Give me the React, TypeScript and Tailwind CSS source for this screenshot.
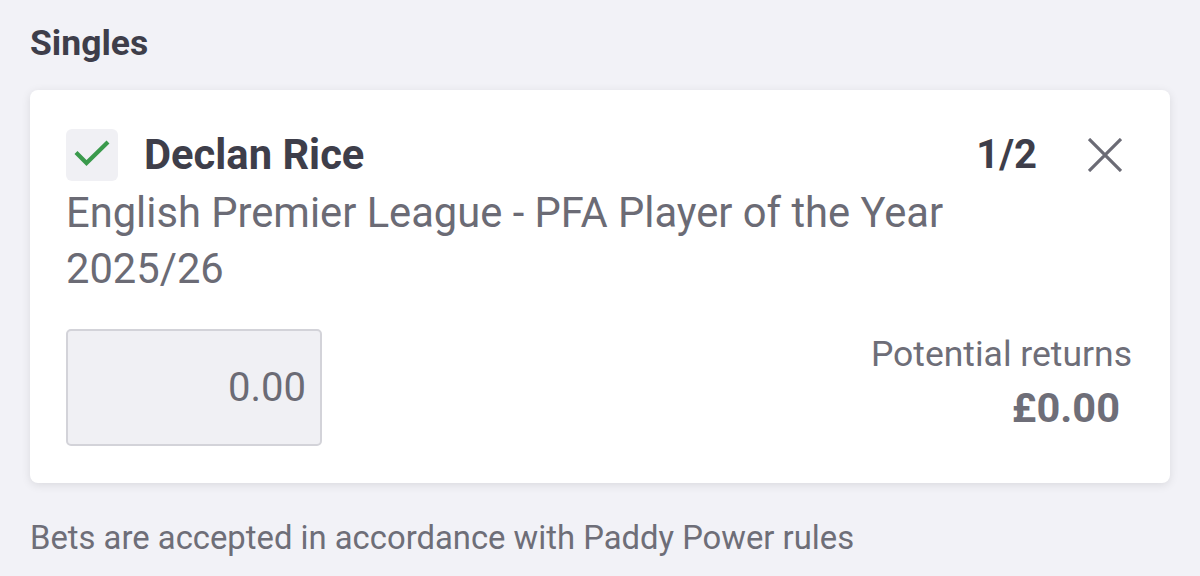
export default function App() {
  return (
    <div className="min-h-screen w-full bg-[#f2f2f7] px-[30px] pt-[23px] font-['Roboto',sans-serif]">
      <h2 className="text-[35.5px] font-bold leading-[40px] text-[#3e3e4a]">Singles</h2>

      <div className="mt-[27px] rounded-[8px] bg-white pb-[37px] pl-[36px] pr-[38px] pt-[39px] shadow-[0_2px_10px_rgba(0,0,0,0.10)]">
        <div className="flex items-center">
          <div className="h-[52px] w-[52px] rounded-[6px] bg-[#f0f0f4]">
            <svg width="52" height="52" viewBox="0 0 52 52" fill="none" stroke="#3a9a4c" strokeWidth="4.2" strokeLinecap="butt" strokeLinejoin="miter">
              <path d="M10 23.5l10.5 10.5L42 13" />
            </svg>
          </div>
          <span className="ml-[26px] text-[41.7px] font-bold leading-none text-[#3e3e4a]">Declan Rice</span>
          <span className="ml-auto text-[40px] font-bold leading-none text-[#3e3e4a]">1/2</span>
          <button className="ml-[51px] mr-[10px] text-[#6b6b75]">
            <svg width="34" height="34" viewBox="0 0 34 34" fill="none" stroke="currentColor" strokeWidth="3.2">
              <path d="M1 1L33 33M33 1L1 33" />
            </svg>
          </button>
        </div>

        <p className="mt-[4px] max-w-[900px] text-[41.7px] leading-[56px] text-[#6b6b75]">
          English Premier League - PFA Player of the Year 2025/26
        </p>

        <div className="mt-[32px] flex items-start justify-between">
          <div className="flex h-[117px] w-[256px] items-center justify-end rounded-[5px] border-2 border-[#d3d3d9] bg-[#f0f0f4] pr-[14px] text-[40px] text-[#6b6b75]">
            0.00
          </div>
          <div className="flex flex-col items-end pt-[3px]">
            <span className="text-[35.5px] leading-[44px] text-[#6e6e78]">Potential returns</span>
            <span className="mr-[12px] mt-[8px] text-[41.5px] font-bold leading-[48px] text-[#6e6e78]">£0.00</span>
          </div>
        </div>
      </div>

      <p className="mt-[35px] text-[32.8px] leading-[40px] text-[#6e6e78]">
        Bets are accepted in accordance with Paddy Power rules
      </p>
    </div>
  );
}
